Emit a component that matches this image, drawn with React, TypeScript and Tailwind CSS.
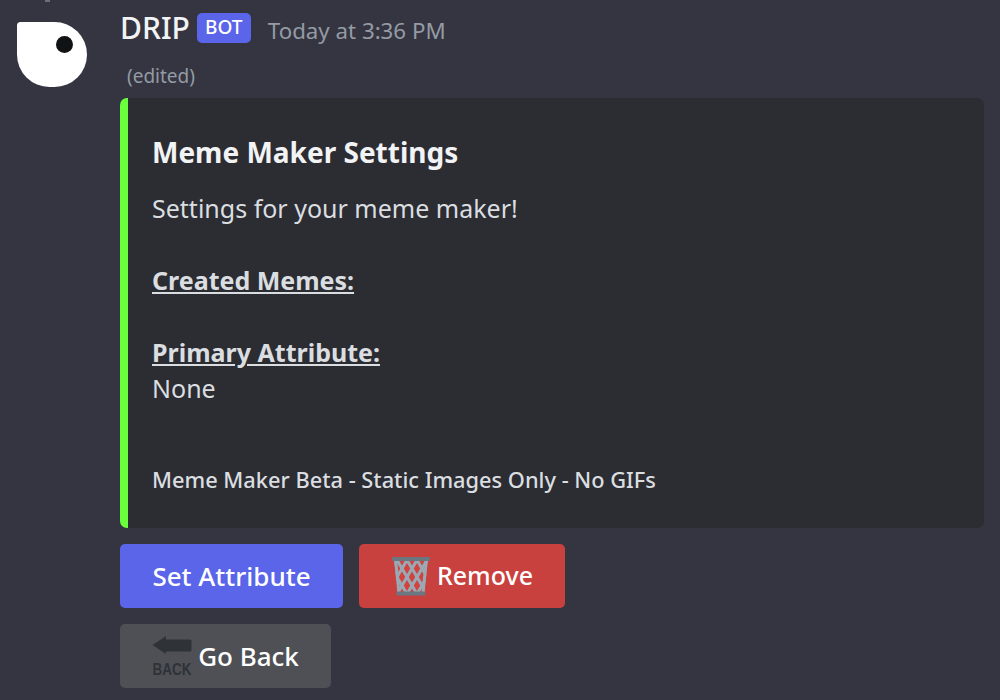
const basketLines = [-14, -4, 6, 16, 26, 36];

const WasteBasket = () => (
  <svg width="40" height="40" viewBox="0 0 40 40" className="shrink-0">
    <clipPath id="basket">
      <path d="M3 3 L37 3 L33 38 L7 38 Z" />
    </clipPath>
    <path d="M3 3 L37 3 L33 38 L7 38 Z" fill="#D2433F" />
    <g clipPath="url(#basket)" stroke="#99AAB5" strokeWidth="3" fill="none">
      {basketLines.map((x) => (
        <g key={x}>
          <path d={`M${x} 4 L${x + 20} 38`} />
          <path d={`M${x + 20} 4 L${x} 38`} />
        </g>
      ))}
    </g>
    <path d="M4.500 3 L8 37" stroke="#99AAB5" strokeWidth="3" />
    <path d="M35.500 3 L32 37" stroke="#99AAB5" strokeWidth="3" />
    <rect x="1" y="1" width="38" height="4" rx="1.500" fill="#6B7780" />
    <rect x="5.500" y="35.500" width="29" height="4" rx="1.500" fill="#6B7780" />
  </svg>
);

const BackArrow = () => (
  <svg width="40" height="42" viewBox="0 0 40 42" className="shrink-0 overflow-visible">
    <path d="M0.500 10 L14 1 V4.500 H38 a1.500 1.500 0 0 1 1.500 1.500 V15 a1.500 1.500 0 0 1 -1.500 1.500 H14 V19 Z" fill="#2F3237" />
    <text x="0.500" y="40" fontFamily="Liberation Sans, sans-serif" fontWeight="700" fontSize="16.500" textLength="39" lengthAdjust="spacingAndGlyphs" fill="#2F3237">
      BACK
    </text>
  </svg>
);

export default function App() {
  return (
    <div className="h-[700px] w-[1000px] overflow-hidden bg-[#343541] font-['Noto_Sans',sans-serif] relative">
      <div className="absolute left-[45px] top-0 h-[2px] w-[5px] bg-[#6d6f78]" />
      <div className="flex pl-[17px] pr-4 pt-[10px]">
        {/* avatar */}
        <div className="mt-3 mr-[33px] h-[66px] w-[70px] shrink-0 relative">
          <div className="h-[65px] w-[70px] rounded-tl-[4px] rounded-tr-[36px] rounded-br-[36px] rounded-bl-[36px] bg-white" />
          <div className="absolute left-[39px] top-[14px] h-[17px] w-[17px] rounded-full bg-[#111214]" />
        </div>

        <div className="w-[864px]">
          <div className="flex h-[38px] items-center">
            <span className="text-[30px] font-medium leading-[38px] text-[#f2f3f5] -mt-[2px]">DRIP</span>
            <span className="ml-[7px] -mt-[3px] flex h-[30px] w-[54px] items-center justify-center rounded-[5px] bg-[#5a65ea] text-[19px] font-medium text-white">
              BOT
            </span>
            <span className="ml-[17px] mt-[4px] text-[22.300px] text-[#949ba4]">Today at 3:36 PM</span>
          </div>
          <div className="mt-[18px] h-[20px] pl-[7px] text-[19px] leading-[20px] text-[#949ba4]">(edited)</div>

          {/* embed */}
          <div className="mt-[12px] h-[430px] rounded-[7px] border-l-[8px] border-[#6aff3c] bg-[#2c2d32] pl-6 pt-[34px]">
            <div className="text-[28px] font-bold leading-[40px] text-[#f2f3f5]">Meme Maker Settings</div>
            <div className="mt-[18px] text-[25px] leading-[36px] text-[#dbdee1]">
              <div>Settings for your meme maker!</div>
              <div className="mt-9 font-bold underline">Created Memes:</div>
              <div className="mt-9 font-bold underline">Primary Attribute:</div>
              <div>None</div>
            </div>
            <div className="mt-[60px] text-[21.800px] font-medium leading-[28px] text-[#dbdee1]">
              Meme Maker Beta - Static Images Only - No GIFs
            </div>
          </div>

          <div className="mt-4 flex gap-4">
            <button className="h-16 w-[223px] rounded-[5px] bg-[#5a65ea] text-[26px] font-medium text-white">
              Set Attribute
            </button>
            <button className="flex h-16 w-[206px] items-center justify-center gap-[6px] rounded-[5px] bg-[#c9413f] text-[25px] font-medium text-white">
              <WasteBasket />
              Remove
            </button>
          </div>
          <div className="mt-4">
            <button className="flex h-16 w-[211px] items-center justify-center gap-[6px] rounded-[5px] bg-[#4e5056] text-[26px] font-medium text-white">
              <BackArrow />
              Go Back
            </button>
          </div>
        </div>
      </div>
    </div>
  );
}
